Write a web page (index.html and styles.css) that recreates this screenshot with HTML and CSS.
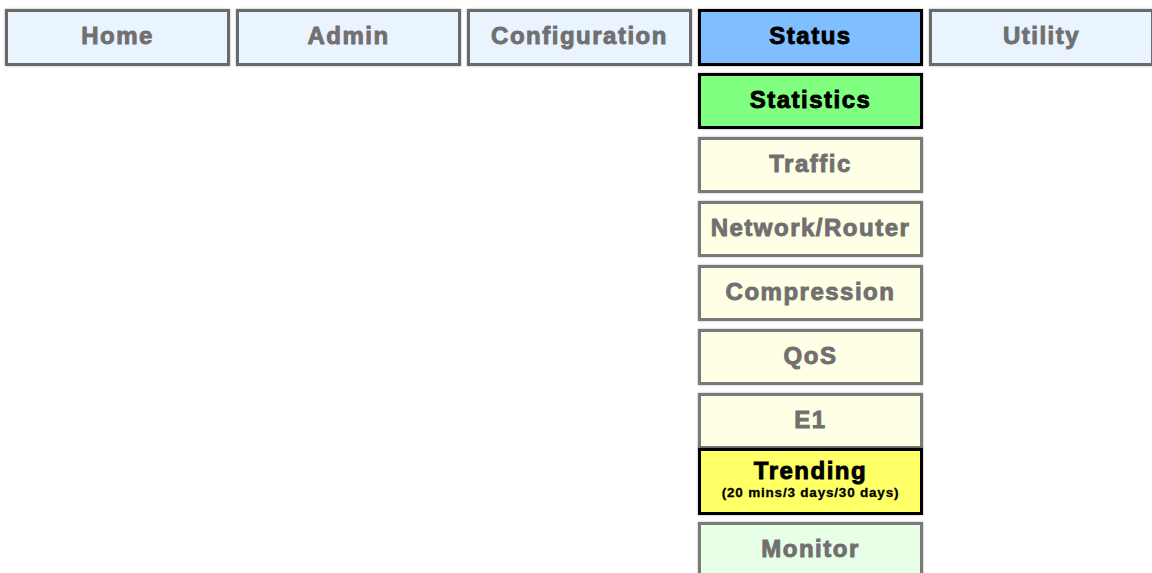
FILE: index.html
```html
<!DOCTYPE html>
<html lang="en">
<head>
    <meta charset="UTF-8">
    <meta name="viewport" content="width=device-width, initial-scale=1.0">
    <title>Status Menu</title>
    <link rel="stylesheet" href="styles.css">
</head>
<body>
    <div class="menubar">
        <div class="menu-item"><a class="btn btn-top" href="#">Home</a></div>
        <div class="menu-item"><a class="btn btn-top" href="#">Admin</a></div>
        <div class="menu-item"><a class="btn btn-top" href="#">Configuration</a></div>
        <div class="menu-item">
            <a class="btn btn-active" href="#">Status</a>
            <div class="submenu">
                <a class="btn btn-current" href="#">Statistics</a>
                <a class="btn btn-sub" href="#">Traffic</a>
                <a class="btn btn-sub" href="#">Network/Router</a>
                <a class="btn btn-sub" href="#">Compression</a>
                <a class="btn btn-sub" href="#">QoS</a>
                <a class="btn btn-sub" href="#">E1</a>
                <a class="btn btn-trend" href="#">Trending<span class="small">(20 mins/3 days/30 days)</span></a>
                <a class="btn btn-monitor" href="#">Monitor</a>
            </div>
        </div>
        <div class="menu-item"><a class="btn btn-top" href="#">Utility</a></div>
    </div>
</body>
</html>
```

FILE: styles.css
```css
body {
    margin: 0;
    padding: 0;
    background: #fff;
    font-family: "Liberation Sans", Arial, sans-serif;
    overflow: hidden;
    height: 573px;
}

.menubar {
    display: flex;
    align-items: flex-start;
    gap: 6px;
    padding: 9px 0 0 5px;
    width: 1160px;
}

.menu-item {
    width: 225px;
    flex: none;
}

.submenu {
    display: flex;
    flex-direction: column;
    gap: 8px;
    margin-top: 7px;
}

.btn {
    box-sizing: border-box;
    display: flex;
    flex-direction: column;
    align-items: center;
    justify-content: center;
    height: 56px;
    padding-bottom: 3px;
    border: 3px solid #6a6a6a;
    box-shadow: 0 0 2px rgba(0, 0, 0, 0.35);
    font-size: 24px;
    font-weight: bold;
    letter-spacing: 1.5px;
    -webkit-text-stroke: 0.9px currentColor;
    color: #707070;
    text-decoration: none;
}

.btn-top {
    height: 57px;
    background-color: #eaf4ff;
}

.btn-active {
    height: 57px;
    background-color: #80bfff;
    border-color: #000;
    color: #000;
}

.btn-current {
    background-color: #80ff80;
    border-color: #000;
    color: #000;
}

.btn-sub {
    background-color: #ffffe6;
    border-color: #7a7a7a;
}

.btn-trend {
    height: 67px;
    margin-top: -9px;
    background-color: #ffff66;
    border-color: #000;
    color: #000;
    line-height: 26px;
    padding-bottom: 4px;
}

.btn-trend .small {
    font-size: 13.5px;
    letter-spacing: 0.8px;
    -webkit-text-stroke: 0.3px currentColor;
    line-height: 18px;
}

.btn-monitor {
    margin-top: -1px;
    background-color: #e6ffe6;
    border-color: #7a7a7a;
}
```
